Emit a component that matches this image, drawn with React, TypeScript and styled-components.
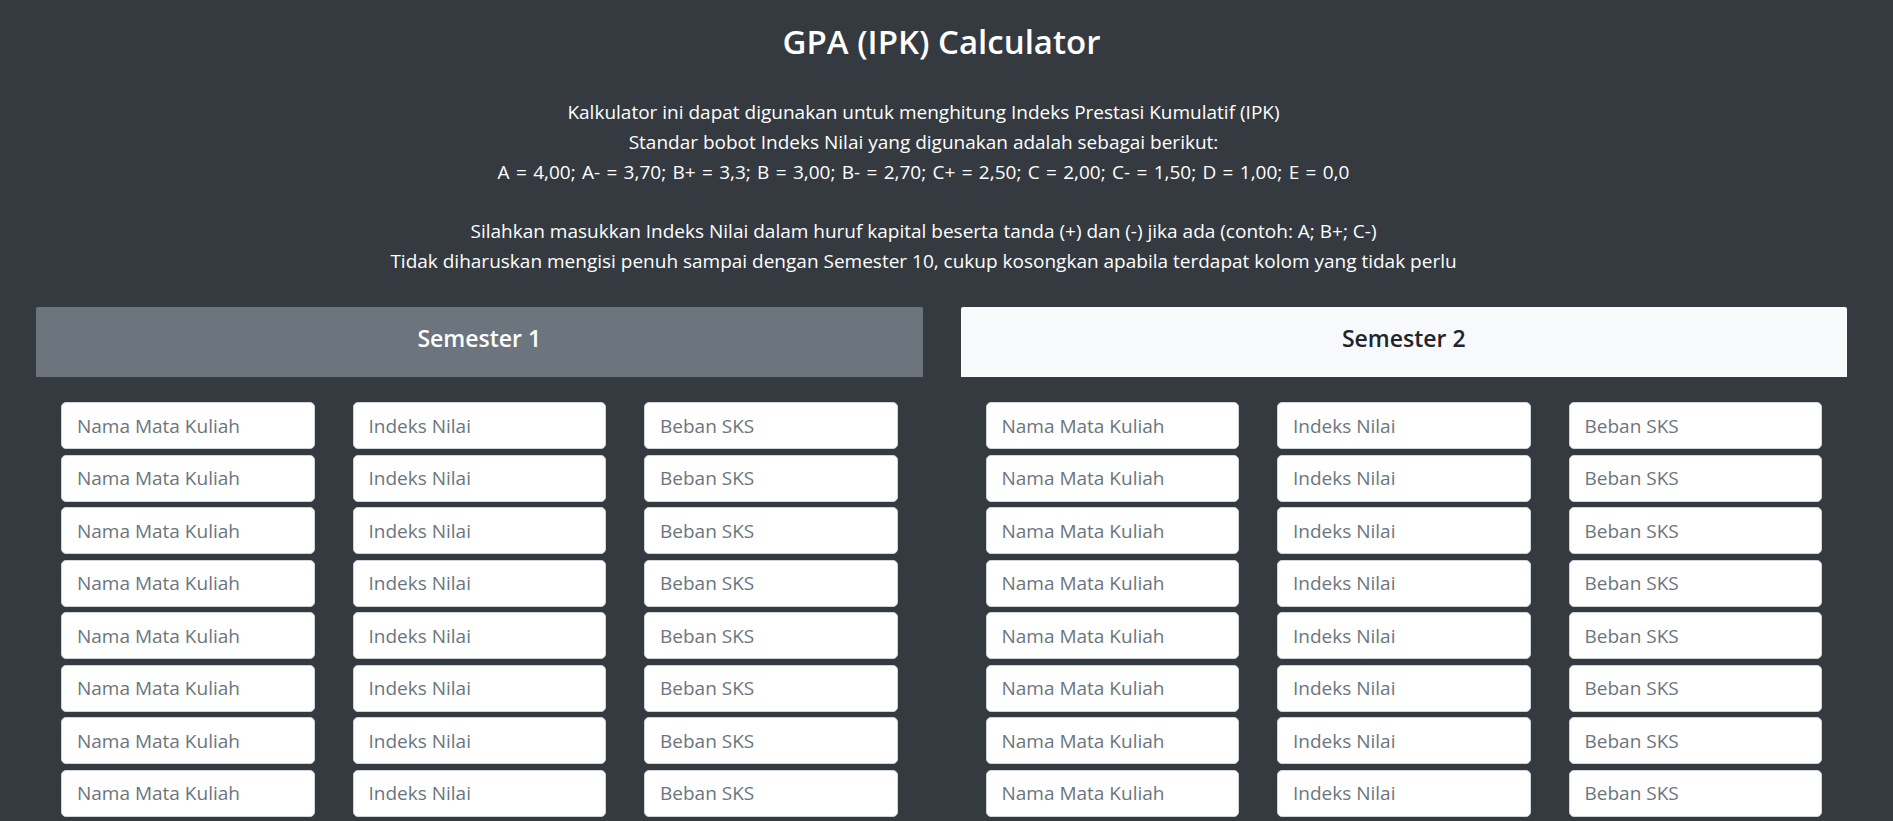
import React from "react";
import styled, { createGlobalStyle } from "styled-components";

const Global = createGlobalStyle`
  html, body {
    margin: 0;
    padding: 0;
    background: #343a40;
    overflow: hidden;
  }
  body {
    font-family: "Open Sans", "Noto Sans", Arial, sans-serif;
    color: #ffffff;
  }
  * { box-sizing: border-box; }
`;

const Page = styled.div`
  padding: 22px 46px 0 36px;
`;

const Header = styled.header`
  display: flex;
  flex-direction: column;
  align-items: center;
  text-align: center;
`;

const Title = styled.h1`
  margin: 0;
  font-size: 33px;
  line-height: 40px;
  font-weight: 600;
  color: #ffffff;
`;

const Intro = styled.p`
  margin: 36px 0 0;
  padding-right: 36px;
  font-size: 19px;
  line-height: 29.8px;
  color: #ffffff;
`;

const Weights = styled.span`
  word-spacing: 1.4px;
`;

const Semesters = styled.div`
  display: grid;
  grid-template-columns: 1fr 1fr;
  column-gap: 38px;
  margin-top: 30px;
`;

const Semester = styled.section`
  display: flex;
  flex-direction: column;
`;

const SemesterHead = styled.div<{ $variant: "secondary" | "light" }>`
  height: 70.5px;
  display: flex;
  align-items: center;
  justify-content: center;
  padding-bottom: 9px;
  border-radius: 2px 2px 0 0;
  background: ${(p) => (p.$variant === "secondary" ? "#6c757d" : "#f8f9fa")};
  color: ${(p) => (p.$variant === "secondary" ? "#ffffff" : "#212529")};
  font-size: 23px;
  font-weight: 600;
`;

const Grid = styled.div`
  display: grid;
  grid-template-columns: repeat(3, 1fr);
  column-gap: 38px;
  row-gap: 5.5px;
  padding: 25px 25px 0 25px;
`;

const Field = styled.input`
  height: 47px;
  width: 100%;
  padding: 0 15px;
  border: 1px solid #ced4da;
  border-radius: 5px;
  background: #ffffff;
  font-family: "Open Sans", "Noto Sans", Arial, sans-serif;
  font-size: 19px;
  color: #495057;
  outline: none;
  &::placeholder {
    color: #6c757d;
    opacity: 1;
  }
`;

const ROWS = 10;

function SemesterBlock({ n, variant }: { n: number; variant: "secondary" | "light" }) {
  return (
    <Semester>
      <SemesterHead $variant={variant}>Semester {n}</SemesterHead>
      <Grid>
        {Array.from({ length: ROWS }).map((_, i) => (
          <React.Fragment key={i}>
            <Field type="text" placeholder="Nama Mata Kuliah" />
            <Field type="text" placeholder="Indeks Nilai" />
            <Field type="text" placeholder="Beban SKS" />
          </React.Fragment>
        ))}
      </Grid>
    </Semester>
  );
}

export default function App() {
  return (
    <>
      <Global />
      <Page>
        <Header>
          <Title>GPA (IPK) Calculator</Title>
          <Intro>
            Kalkulator ini dapat digunakan untuk menghitung Indeks Prestasi Kumulatif (IPK)
            <br />
            Standar bobot Indeks Nilai yang digunakan adalah sebagai berikut:
            <br />
            <Weights>
              A = 4,00; A- = 3,70; B+ = 3,3; B = 3,00; B- = 2,70; C+ = 2,50; C = 2,00; C- = 1,50; D = 1,00; E = 0,0
            </Weights>
            <br />
            <br />
            Silahkan masukkan Indeks Nilai dalam huruf kapital beserta tanda (+) dan (-) jika ada (contoh: A; B+; C-)
            <br />
            Tidak diharuskan mengisi penuh sampai dengan Semester 10, cukup kosongkan apabila terdapat kolom yang tidak perlu
          </Intro>
        </Header>
        <Semesters>
          <SemesterBlock n={1} variant="secondary" />
          <SemesterBlock n={2} variant="light" />
        </Semesters>
      </Page>
    </>
  );
}
